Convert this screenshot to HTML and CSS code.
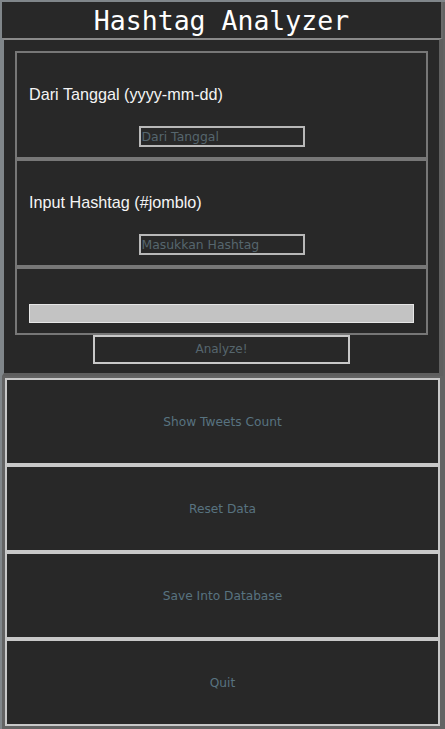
FILE: index.html
```html
<!DOCTYPE html>
<html>
<head>
<meta charset="utf-8">
<link rel="stylesheet" href="styles.css">
</head>
<body>
<div class="app">
  <header class="header">Hashtag Analyzer</header>
  <section class="form">
    <div class="group">
      <div class="label">Dari Tanggal (yyyy-mm-dd)</div>
      <div class="field">Dari Tanggal</div>
    </div>
    <div class="group">
      <div class="label">Input Hashtag (#jomblo)</div>
      <div class="field">Masukkan Hashtag</div>
    </div>
    <div class="group group-progress">
      <div class="progress"></div>
    </div>
    <div class="analyze">Analyze!</div>
  </section>
  <section class="actions">
    <div class="action">Show Tweets Count</div>
    <div class="action">Reset Data</div>
    <div class="action">Save Into Database</div>
    <div class="action">Quit</div>
  </section>
</div>
</body>
</html>
```
FILE: styles.css
```css
html, body {
  margin: 0;
  padding: 0;
  background: #646464;
}
.app {
  width: 445px;
  height: 729px;
  box-sizing: border-box;
  display: flex;
  flex-direction: column;
  background: #636363;
  border-left: 2px solid #80868a;
  border-top: 2px solid #80868a;
}
.header {
  height: 36px;
  background: #282828;
  margin-right: 2px;
  border-right: 2px solid #6a6a6a;
  color: #ffffff;
  font-family: "DejaVu Sans Mono", monospace;
  font-size: 26.5px;
  line-height: 37px;
  text-align: center;
  box-sizing: border-box;
}
.form {
  height: 338px;
  box-sizing: border-box;
  background: #282828;
  border-top: 2px solid #8a8a8a;
  border-left: 2px solid #80868a;
  border-right: 4px solid #5f5f5f;
  border-bottom: 3px solid #5f5f5f;
  margin-right: 2px;
  padding: 11px 11px 0 11px;
  display: flex;
  flex-direction: column;
  align-items: stretch;
}
.group {
  height: 108px;
  flex: none;
  box-sizing: border-box;
  border: 2px solid #777777;
  padding: 32px 12px 0 12px;
  display: flex;
  flex-direction: column;
  align-items: flex-start;
}
.label {
  color: #f4f4f4;
  font-family: "Liberation Sans", Arial, sans-serif;
  font-size: 16.2px;
  line-height: 18px;
  height: 18px;
}
.field {
  margin-top: 23px;
  align-self: center;
  width: 166px;
  height: 21px;
  box-sizing: border-box;
  border: 2px solid #b8b8b8;
  color: #56666e;
  font-family: "DejaVu Sans", sans-serif;
  font-size: 12.4px;
  line-height: 18px;
  padding-left: 1px;
  white-space: nowrap;
  overflow: hidden;
}
.group-progress {
  height: 68px;
  padding-top: 35px;
  padding-left: 12px;
  padding-right: 12px;
}
.progress {
  width: 100%;
  height: 19px;
  box-sizing: border-box;
  background: #c3c3c3;
  border: 1px solid #e6e6e6;
}
.analyze {
  align-self: center;
  width: 257px;
  height: 29px;
  flex: none;
  box-sizing: border-box;
  border: 2px solid #c8c8c8;
  color: #56666e;
  font-family: "DejaVu Sans", sans-serif;
  font-size: 12px;
  line-height: 25px;
  text-align: center;
}
.actions {
  flex: 1;
  display: flex;
  flex-direction: column;
  padding: 2px 5px 3px 3px;
  background: #636363;
}
.action {
  height: 87px;
  flex: none;
  box-sizing: border-box;
  background: #282828;
  border: 2px solid #c8c8c8;
  color: #587380;
  font-family: "DejaVu Sans", sans-serif;
  font-size: 12.2px;
  display: flex;
  align-items: center;
  justify-content: center;
}
```
